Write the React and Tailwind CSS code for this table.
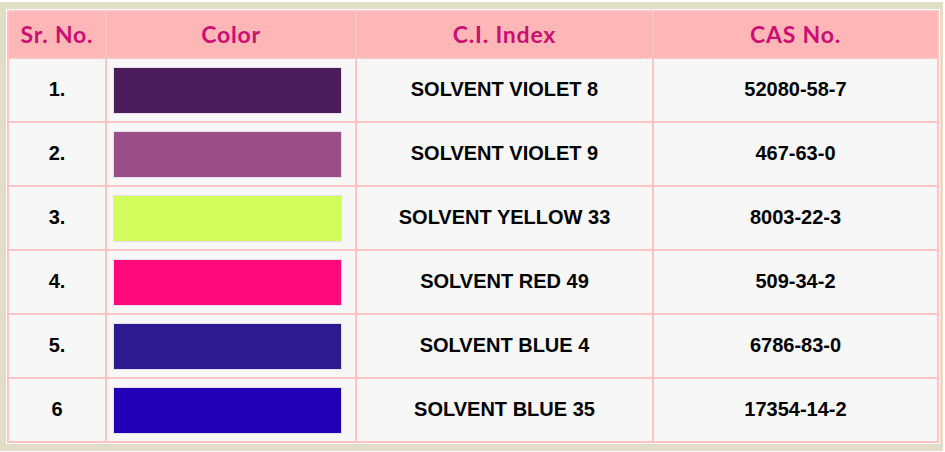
import React from 'react';

const rows = [
  { sr: '1.', color: 'bg-[#4b1d5c]', name: 'SOLVENT VIOLET 8', cas: '52080-58-7' },
  { sr: '2.', color: 'bg-[#9a4f86]', name: 'SOLVENT VIOLET 9', cas: '467-63-0' },
  { sr: '3.', color: 'bg-[#d3fd5c]', name: 'SOLVENT YELLOW 33', cas: '8003-22-3' },
  { sr: '4.', color: 'bg-[#fe0a7a]', name: 'SOLVENT RED 49', cas: '509-34-2' },
  { sr: '5.', color: 'bg-[#2e1a90]', name: 'SOLVENT BLUE 4', cas: '6786-83-0' },
  { sr: '6', color: 'bg-[#2100b5]', name: 'SOLVENT BLUE 35', cas: '17354-14-2' },
];

const headers = ['Sr. No.', 'Color', 'C.I. Index', 'CAS No.'];

export default function App() {
  return (
    <div className="w-[945px] h-[452px] bg-white pt-[2px]">
      <div className="w-[943px] h-[449px] bg-[#e2ddc7] pl-[6px] pt-[7px]">
        <div className="w-[934px] border border-white">
          {/* Table grid: pink gap lines between cells */}
          <div className="grid grid-cols-[96px_248px_295px_283px] grid-rows-[45px_repeat(6,62px)] gap-[2px] bg-[#ffc3c3] p-[2px] font-['Liberation_Sans',Arial,sans-serif]">
            {headers.map((h) => (
              <div
                key={h}
                className="bg-[#ffb6b6] flex items-center justify-center pb-[1px] text-[23px] font-bold text-[#cc0f72] font-['Lato',sans-serif] tracking-[0.8px]"
              >
                {h}
              </div>
            ))}
            {rows.map((r) => (
              <React.Fragment key={r.sr}>
                <div className="bg-[#f7f7f7] flex items-center justify-center pb-[2px] text-[20px] font-bold text-black">
                  {r.sr}
                </div>
                <div className="bg-[#f7f7f7] flex items-center pl-[6px]">
                  <div className={`w-[229px] h-[47px] border border-[#e8dcef] ${r.color}`} />
                </div>
                <div className="bg-[#f7f7f7] flex items-center justify-center pb-[2px] text-[20px] font-bold text-black">
                  {r.name}
                </div>
                <div className="bg-[#f7f7f7] flex items-center justify-center pb-[2px] text-[20px] font-bold text-black">
                  {r.cas}
                </div>
              </React.Fragment>
            ))}
          </div>
        </div>
      </div>
    </div>
  );
}
